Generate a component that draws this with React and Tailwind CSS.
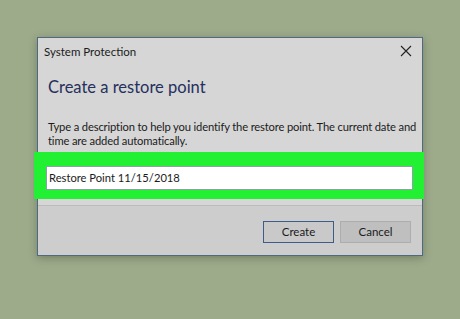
import React, { useState } from "react";

export default function App() {
    const [desc, setDesc] = useState("Restore Point 11/15/2018");

    return (
        <div className="w-[460px] h-[319px] bg-[#9dab8b] pt-[37px] pl-[37px]" style={{ fontFamily: 'Lato, "Noto Sans", sans-serif' }}>
            <div className="w-[386px] h-[219px] border border-[#4d6a82] bg-[#d6d6d6] shadow-[0_2px_8px_rgba(40,50,30,0.35)] flex flex-col">
                {/* title bar */}
                <div className="h-[28px] flex items-center justify-between pl-[6px] pr-[10px]">
                    <span className="text-[11.5px] text-[#1b1b1b]">System Protection</span>
                    <svg width="12" height="12" viewBox="0 0 12 12" className="mt-[-2px]">
                        <path d="M1 1L11 11M11 1L1 11" stroke="#222" strokeWidth="1.1" />
                    </svg>
                </div>

                <div className="pl-[10px] pr-[4px]">
                    <h1 className="mt-[10px] text-[16.5px] leading-[22px] text-[#25305c]">Create a restore point</h1>
                    <p className="mt-[22px] text-[11.2px] leading-[14px] text-[#1b1b1b] tracking-[-0.15px]">
                        Type a description to help you identify the restore point. The current date and time are added automatically.
                    </p>
                </div>

                {/* highlighted field */}
                <div className="mt-[4px] ml-[-4px] mr-[-2px] h-[47px] bg-[#22f033] pt-[12px] pl-[12px] pr-[11px]">
                    <input
                        value={desc}
                        onChange={(e) => setDesc(e.target.value)}
                        className="w-full h-[24px] bg-white border border-[#8fa0a8] px-[2px] text-[11.2px] text-[#1b1b1b] outline-none"
                    />
                </div>

                {/* footer */}
                <div className="mt-[6px] flex-1 border-t border-[#bcbcbc] bg-[#cdcdcd] flex justify-end items-start gap-[6px] pt-[15px] pr-[11px]">
                    <button className="w-[71px] h-[22px] bg-[#c9c9c9] border border-[#3e5b8e] text-[11.5px] text-[#1b1b1b]">Create</button>
                    <button className="w-[71px] h-[22px] bg-[#bfbfbf] border border-[#adadad] text-[11.5px] text-[#1b1b1b]">Cancel</button>
                </div>
            </div>
        </div>
    );
}
